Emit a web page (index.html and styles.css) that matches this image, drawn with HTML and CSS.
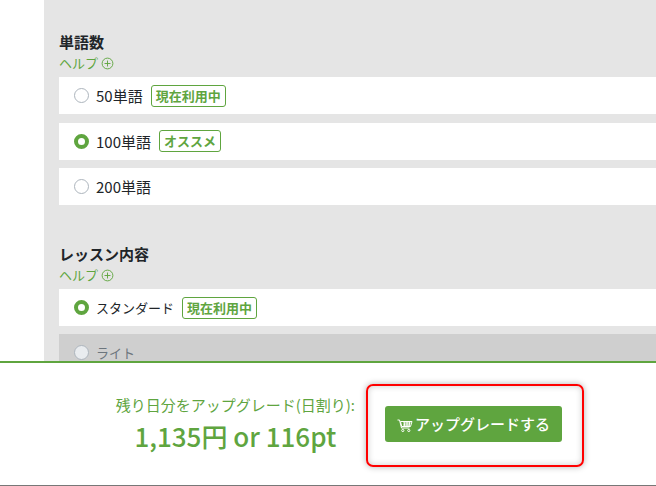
FILE: index.html
```html
<!DOCTYPE html>
<html lang="ja">
<head>
    <meta charset="UTF-8">
    <meta name="viewport" content="width=device-width, initial-scale=1.0">
    <title>プラン変更</title>
    <link rel="stylesheet" href="styles.css">
</head>
<body>
    <main class="panel">
        <section class="group">
            <h3 class="group-title">単語数</h3>
            <a class="help" href="#">ヘルプ
                <svg class="help-icon" viewBox="0 0 14 14" fill="none" stroke="currentColor">
                    <circle cx="7" cy="7" r="5.8"/>
                    <path d="M7 3.8v6.4M3.8 7h6.4"/>
                </svg>
            </a>
            <label class="option"><span class="radio"></span>50単語<span class="tag">現在利用中</span></label>
            <label class="option"><span class="radio checked"></span>100単語<span class="tag">オススメ</span></label>
            <label class="option"><span class="radio"></span>200単語</label>
        </section>
        <section class="group">
            <h3 class="group-title">レッスン内容</h3>
            <a class="help" href="#">ヘルプ
                <svg class="help-icon" viewBox="0 0 14 14" fill="none" stroke="currentColor">
                    <circle cx="7" cy="7" r="5.8"/>
                    <path d="M7 3.8v6.4M3.8 7h6.4"/>
                </svg>
            </a>
            <label class="option small"><span class="radio checked"></span>スタンダード<span class="tag">現在利用中</span></label>
            <label class="option small disabled"><span class="radio"></span>ライト</label>
        </section>
    </main>
    <footer class="upgrade-bar">
        <div class="price">
            <p class="price-note">残り日分をアップグレード(日割り):</p>
            <p class="price-value">1,135円 or 116pt</p>
        </div>
        <div class="highlight">
            <button class="btn-upgrade">
                <svg class="cart" viewBox="0 0 16 16" fill="none" stroke="currentColor" stroke-width="1">
                    <path d="M0.5 3h2l2 8h8"/>
                    <path d="M3.5 4.5h11.5l-1.5 5h-8.8z"/>
                    <path d="M6.5 6h7M6 8h7M7 4.5l.8 5M10 4.5v5M12.8 4.5l-.8 5"/>
                    <circle cx="5.8" cy="13.5" r="1.1"/>
                    <circle cx="11.8" cy="13.5" r="1.1"/>
                </svg>アップグレードする</button>
        </div>
    </footer>
</body>
</html>
```

FILE: styles.css
```css
html, body {
    height: 100%;
}
body {
    margin: 0;
    padding-left: 44px;
    background: #ffffff;
    color: #212529;
    font-family: "Noto Sans CJK JP", "Noto Sans", sans-serif;
    font-size: 15px;
    overflow: hidden;
}
.panel {
    background: #e5e5e5;
    padding: 30px 0 0 15px;
    height: 100%;
    box-sizing: border-box;
}
.group {
    margin-bottom: 37px;
}
.group-title {
    margin: 0;
    font-size: 15px;
    font-weight: 700;
    line-height: 23px;
}
.help {
    display: flex;
    align-items: center;
    gap: 3px;
    height: 18px;
    margin-bottom: 6px;
    color: #5fa53f;
    font-size: 13px;
    text-decoration: none;
}
.help-icon {
    width: 13px;
    height: 13px;
    margin-top: 2px;
}
.option {
    display: flex;
    align-items: center;
    height: 37px;
    margin-bottom: 8.5px;
    padding-left: 15px;
    background: #ffffff;
    font-size: 15px;
}
.option.small {
    margin-bottom: 8px;
    font-size: 13px;
}
.option.disabled {
    background: #cfcfcf;
    color: #6c757d;
}
.radio {
    width: 15px;
    height: 15px;
    margin-right: 7px;
    box-sizing: border-box;
    border: 1px solid #adb5bd;
    border-radius: 50%;
    background: #ffffff;
}
.radio.checked {
    border: 4px solid #5fa53f;
}
.disabled .radio {
    background: #e9ecef;
}
.tag {
    margin-left: 8px;
    padding: 0 4px;
    height: 22px;
    box-sizing: border-box;
    border: 1px solid #5fa53f;
    border-radius: 3px;
    color: #5fa53f;
    font-size: 13px;
    font-weight: 700;
    line-height: 20px;
}
.upgrade-bar {
    position: fixed;
    left: 0;
    right: 0;
    bottom: 0;
    height: 125px;
    box-sizing: border-box;
    display: flex;
    align-items: center;
    justify-content: flex-end;
    gap: 11px;
    padding: 0 72px 0 0;
    background: #ffffff;
    border-top: 2px solid #5fa53f;
    border-bottom: 1px solid #777777;
}
.price {
    text-align: center;
    color: #5fa53f;
}
.price-note {
    margin: 0;
    font-size: 15px;
    line-height: 20px;
}
.price-value {
    margin: 4px 0 0;
    font-size: 26px;
    font-weight: 500;
    line-height: 34px;
}
.highlight {
    margin-top: 2px;
    padding: 20px 20px 23px 17px;
    border: 2px solid #ff0000;
    border-radius: 7px;
    box-shadow: 0 0 6px rgba(0, 0, 0, 0.3), inset 0 0 6px rgba(0, 0, 0, 0.2);
}
.btn-upgrade {
    display: flex;
    align-items: center;
    height: 36px;
    padding: 0 12px;
    border: none;
    border-radius: 3px;
    background: #5fa53f;
    color: #ffffff;
    font-family: inherit;
    font-size: 15px;
    font-weight: 500;
}
.cart {
    width: 16px;
    height: 16px;
    margin-top: 2px;
    margin-right: 2px;
}
```
